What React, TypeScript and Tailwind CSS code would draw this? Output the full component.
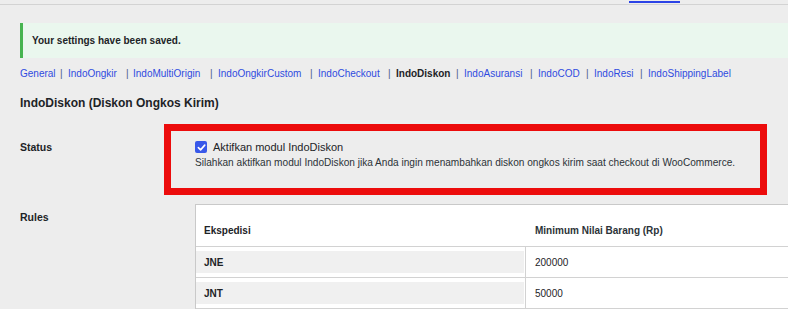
import React from 'react';

const tabs = [
  { label: 'General', w: 'w-[40px]', sep: 'w-[8px]' },
  { label: 'IndoOngkir', w: 'w-[58px]', sep: 'w-[7px]' },
  { label: 'IndoMultiOrigin', w: 'w-[77px]', sep: 'w-[8px]' },
  { label: 'IndoOngkirCustom', w: 'w-[92px]', sep: 'w-[8px]' },
  { label: 'IndoCheckout', w: 'w-[70px]', sep: 'w-[8px]' },
  { label: 'IndoDiskon', w: 'w-[60px]', sep: 'w-[8px]', active: true },
  { label: 'IndoAsuransi', w: 'w-[66px]', sep: 'w-[8px]' },
  { label: 'IndoCOD', w: 'w-[48px]', sep: 'w-[8px]' },
  { label: 'IndoResi', w: 'w-[46px]', sep: 'w-[8px]' },
  { label: 'IndoShippingLabel', w: 'w-[90px]', sep: '' },
];

const rules = [
  { courier: 'JNE', min: '200000' },
  { courier: 'JNT', min: '50000' },
  { courier: '', min: '' },
];

export default function App() {
  return (
    <div className="relative w-[788px] h-[309px] overflow-hidden bg-[#ededed] font-['Liberation_Sans',Arial,sans-serif] text-[#1d2327]">
      {/* top tab strip */}
      <div className="h-[4px] border-b border-[#d3d3d3]">
        <div className="ml-[629px] mt-[1px] w-[51px] h-[2px] bg-[#2b43e6]" />
      </div>

      {/* notice */}
      <div className="mt-[18px] ml-[20px] h-[35px] flex items-center border-l-[3px] border-[#46b450] bg-[#eaf7ee] pl-[9px]">
        <p className="text-[10px] font-bold leading-[14px]">Your settings have been saved.</p>
      </div>

      {/* sub nav */}
      <div className="mt-[9px] ml-[20px] flex h-[14px] text-[10px] leading-[14px] whitespace-nowrap">
        {tabs.map((t) => (
          <React.Fragment key={t.label}>
            <span className={`${t.w} shrink-0 ${t.active ? 'font-bold text-[#1d2327]' : 'text-[#2f4be0]'}`}>
              {t.label}
            </span>
            {t.sep && <span className={`${t.sep} shrink-0 text-[#4a5c8c]`}>|</span>}
          </React.Fragment>
        ))}
      </div>

      <h2 className="mt-[14px] ml-[20px] text-[12px] font-bold leading-[16px]">
        IndoDiskon (Diskon Ongkos Kirim)
      </h2>

      {/* status row */}
      <div className="mt-[29px] ml-[20px] flex">
        <div className="w-[175px] shrink-0 text-[10.5px] font-bold leading-[14px]">Status</div>
        <div>
          <label className="flex items-center h-[14px] gap-[6px]">
            <span className="w-[12px] h-[12px] rounded-[2px] bg-[#3858e9] flex items-center justify-center">
              <svg width="9" height="9" viewBox="0 0 10 10" fill="none">
                <path d="M1.5 5.2 4 7.6 8.6 2.4" stroke="white" strokeWidth="1.8" strokeLinecap="round" strokeLinejoin="round" />
              </svg>
            </span>
            <span className="text-[11px] leading-[14px]">Aktifkan modul IndoDiskon</span>
          </label>
          <p className="mt-[2px] text-[10.1px] leading-[14px] text-[#2c3338] whitespace-nowrap">
            Silahkan aktifkan modul IndoDiskon jika Anda ingin menambahkan diskon ongkos kirim saat checkout di WooCommerce.
          </p>
        </div>
      </div>

      {/* rules row */}
      <div className="mt-[34px] ml-[20px] flex">
        <div className="w-[175px] shrink-0 mt-[6px] text-[10.5px] font-bold leading-[14px]">Rules</div>
        <div className="w-[700px] shrink-0 bg-white border-l border-t border-[#c9c9c9]">
          <div className="flex h-[42px] items-end pb-[8px] border-b border-[#d2d2d2] text-[10px] leading-[14px]">
            <div className="w-[330px] shrink-0 pl-[8px] font-bold">Ekspedisi</div>
            <div className="pl-[9px] font-semibold text-[#2c3338]">Minimum Nilai Barang (Rp)</div>
          </div>
          {rules.map((r, i) => (
            <div key={i} className="flex h-[31px] border-b border-[#d2d2d2] text-[10px]">
              <div className="w-[330px] shrink-0 border-r border-[#d2d2d2] py-[4px] pr-[1px]">
                <div className="h-[22px] bg-[#f0f0f0] pl-[8px] flex items-center font-bold">{r.courier}</div>
              </div>
              <div className="pl-[9px] flex items-center">{r.min}</div>
            </div>
          ))}
        </div>
      </div>

      {/* highlight annotation */}
      <div className="absolute left-[164px] top-[124px] w-[603px] h-[71px] border-[7px] border-[#ec0c0c]" />
    </div>
  );
}
